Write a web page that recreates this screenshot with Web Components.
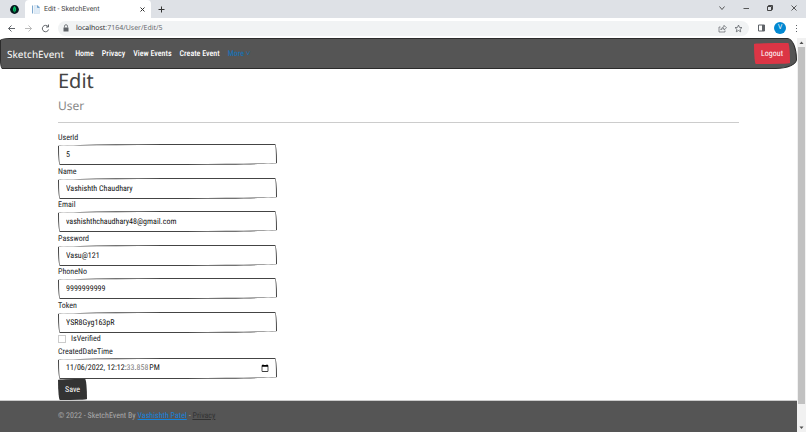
<!DOCTYPE html>
<html lang="en">
<head>
<meta charset="utf-8">
<title>Edit - SketchEvent</title>
<style>
html,body{margin:0}
body{font:8px/12px "Roboto Condensed","Roboto",sans-serif;color:#212529;background:#fff;text-rendering:geometricPrecision}
</style>
</head>
<body>
<browser-window>
  <tab-strip slot="tabs">Edit - SketchEvent</tab-strip>
  <address-bar slot="address" host="localhost" path=":7164/User/Edit/5"></address-bar>
  <site-nav></site-nav>
  <edit-form>
    <text-field label="UserId" value="5"></text-field>
    <text-field label="Name" value="Vashishth Chaudhary"></text-field>
    <text-field label="Email" value="vashishthchaudhary48@gmail.com"></text-field>
    <text-field label="Password" value="Vasu@121"></text-field>
    <text-field label="PhoneNo" value="9999999999"></text-field>
    <text-field label="Token" value="YSR8Gyg163pR"></text-field>
    <check-field>IsVerified</check-field>
    <text-field label="CreatedDateTime" type="datetime-local" value="2022-11-06T12:12:33.858"></text-field>
    <save-button>Save</save-button>
  </edit-form>
  <site-footer></site-footer>
</browser-window>
<script>
const define = (name, markup) => customElements.define(name, class extends HTMLElement {
  constructor() {
    super();
    this.attachShadow({ mode: 'open' }).innerHTML =
      '<style>:host,*{box-sizing:border-box}button,input{text-rendering:inherit}button{font:inherit;cursor:pointer}svg{display:block;fill:none;stroke:currentColor}</style>' +
      (typeof markup === 'function' ? markup(this) : markup);
  }
});

define('browser-window', `
<style>
:host{display:flex;flex-direction:column;min-height:100vh}
.view{flex:1;display:flex}
.page{flex:1;min-width:0;display:flex;flex-direction:column}
.bar{width:9px;background:#f1f1f1;display:flex;flex-direction:column;align-items:center;color:#505050}
.bar svg{fill:currentColor;stroke:none}
.thumb{flex:1;width:7px;margin-bottom:19px;background:#c1c1c1}
</style>
<slot name="tabs"></slot><slot name="address"></slot>
<div class="view">
  <div class="page"><slot></slot></div>
  <div class="bar"><svg width="9" height="9"><path d="M2.5 6 4.5 3.5 6.5 6z"/></svg><div class="thumb"></div><svg width="9" height="9"><path d="M2.5 3.5 4.5 6 6.5 3.5z"/></svg></div>
</div>`);

define('tab-strip', `
<style>
:host{display:flex;align-items:stretch;height:18px;background:#dee1e6;color:#444;font:7px/18px "Roboto",sans-serif}
.pin{width:25px;display:flex;align-items:center;justify-content:center;padding-left:4px}
.tab{width:126px;background:#fff;border-radius:4px 4px 0 0;display:flex;align-items:center;gap:4px;padding:0 6px 0 7px}
.title{flex:1;white-space:nowrap}
button{border:0;background:none;padding:0;color:#333;display:flex;align-items:center}
.new{margin-left:7px}
.win{margin-left:auto;display:flex;gap:16px;padding:0 8px 3px 0}
</style>
<div class="pin"><svg width="9" height="9"><circle cx="4.5" cy="4.5" r="4.4" fill="#07161d" stroke="none"/><path d="M4.5 1C6.800 3.200 6.500 6 4.500 7.200 2.500 6 2.300 3.200 4.500 1z" fill="#00c766" stroke="none"/><path d="M4.500 3.500V8.200" stroke="#09643e" stroke-width=".6"/></svg></div>
<div class="tab">
  <svg width="8" height="9"><path d="M.5.500v8" stroke="#7fa9cf"/><path d="M2 .500h4l1.500 1.500v6.500H2z" fill="#e0ecf7" stroke="#c7d8e8" stroke-width=".5"/><path d="M5.500.500v2h2" fill="#5791c3" stroke="#5791c3" stroke-width=".6"/></svg>
  <span class="title"><slot></slot></span>
  <button aria-label="Close tab"><svg width="5" height="5"><path d="M.5.500l4 4M4.500.500l-4 4"/></svg></button>
</div>
<button class="new" aria-label="New tab"><svg width="7" height="7"><path d="M3.500.500v6M.5 3.500h6"/></svg></button>
<div class="win">
  <button aria-label="Search tabs"><svg width="8" height="8"><path d="M1.500 2.500 4 5.500 6.500 2.500" stroke-width=".8"/></svg></button>
  <button aria-label="Minimize"><svg width="8" height="8"><path d="M1.500 4.500h5.500" stroke-width=".8"/></svg></button>
  <button aria-label="Restore"><svg width="8" height="8"><path d="M1.500 2.500h4v4h-4zM2.500 2.500v-1h4v4h-1" stroke-width=".9"/></svg></button>
  <button aria-label="Close"><svg width="8" height="8"><path d="M1.500 1.500l5 5M6.500 1.500l-5 5" stroke-width=".8"/></svg></button>
</div>`);

define('address-bar', el => `
<style>
:host{display:flex;align-items:center;height:20px;background:#fff;color:#5f6368;font:7px/15px "Open Sans",sans-serif;padding:0 7px;gap:8px}
button{border:0;background:none;padding:0;color:inherit;display:block}
.omni{flex:1;height:15px;border-radius:8px;background:#f1f3f4;display:flex;align-items:center;gap:7px;padding:0 6px 0 5px}
.url{flex:1;white-space:nowrap}
b{font-weight:400;color:#202124}
.v{width:12px;height:12px;line-height:12px;border-radius:50%;background:#0288d1;color:#fff;text-align:center}
</style>
<button aria-label="Back"><svg width="9" height="9"><path d="M8 4.500H1.500M4.500 1.500l-3 3 3 3"/></svg></button>
<button aria-label="Forward" style="color:#aaa"><svg width="9" height="9"><path d="M1 4.500h6.500M4.500 1.500l3 3-3 3" stroke-width=".8"/></svg></button>
<button aria-label="Reload"><svg width="9" height="9"><path d="M7 2.500A3.200 3.200 0 1 0 7.600 5.500M7.500.500v2.500H5"/></svg></button>
<div class="omni">
  <svg width="6" height="8"><path d="M.5 3.500h5v4h-5z" fill="currentColor" stroke="none"/><path d="M1.500 3.500V2.200a1.500 1.500 0 0 1 3 0v1.300" stroke-width=".8"/></svg>
  <span class="url"><b>${el.getAttribute('host')}</b>${el.getAttribute('path')}</span>
  <button aria-label="Share"><svg width="9" height="9"><path d="M2.500 3H1v5h6V6.500M2.800 6C3 4 4.500 3 6 3V1.300L8.500 3.800 6 6V4.500C4.500 4.500 3.500 5 2.800 6z" stroke-width=".7"/></svg></button>
  <button aria-label="Bookmark"><svg width="9" height="9"><path d="M4.500 1l1 2.400 2.500.2-1.900 1.700.6 2.500-2.200-1.300-2.200 1.300.6-2.500L1 3.600l2.500-.2z" stroke-width=".8"/></svg></button>
</div>
<button aria-label="Side panel"><svg width="9" height="8"><path d="M1.500 1h6v6h-6z"/><path d="M5 1h3v6H5z" fill="currentColor" stroke="none"/></svg></button>
<button class="v" aria-label="Profile">V</button>
<button aria-label="Menu"><svg width="5" height="9"><path d="M2 1h1v1H2zM2 4h1v1H2zM2 7h1v1H2z" fill="currentColor" stroke="none"/></svg></button>`);

define('site-nav', `
<style>
:host{display:flex;align-items:center;height:31px;background:#555;border:1px solid #2b2b2b;border-radius:13px 13px 29px 3px / 3px 29px 13px 13px;padding:0 6px;color:#fff}
.brand{font:10px/16px "Noto Sans",sans-serif;margin-right:11px}
nav{display:flex;gap:8px;font-weight:500}
a{color:#fff;text-decoration:none;white-space:nowrap}
.more{color:#1b6fae}
button{margin-left:auto;height:21px;padding:0 7px;border:0;background:#dc3545;color:#fff;border-radius:36px 2px 36px 2px / 1px 20px 1px 20px}
</style>
<a class="brand" href="#">SketchEvent</a>
<nav><a href="#">Home</a><a href="#">Privacy</a><a href="#">View Events</a><a href="#">Create Event</a><a class="more" href="#">More ˅</a></nav>
<button>Logout</button>`);

define('edit-form', `
<style>
:host{flex:1;display:flex;flex-direction:column;margin:0 58px}
h1{font:400 20px/24px "Noto Sans",sans-serif;margin:0;color:#444}
h4{font:400 12px/16px "Noto Sans",sans-serif;margin:5px 0 8px;color:#888}
hr{width:100%;border:0;border-top:1px solid #ccc;margin:0 0 9px}
form{flex:1;width:219px;display:flex;flex-direction:column;justify-content:space-between}
</style>
<h1>Edit</h1><h4>User</h4><hr><form><slot></slot></form>`);

define('text-field', el => `
<style>
:host{display:block}
label{display:block;height:12px}
input{display:block;width:100%;height:21px;font:400 8px/12px "Roboto Condensed","Roboto",sans-serif;color:#111;background:#fff;border:1px solid #444;padding:0 7px;border-radius:130px 2px 113px 2px / 2px 18px 2px 18px}
input::-webkit-calendar-picker-indicator{width:8px;height:8px;padding:0}
input::-webkit-datetime-edit,
input::-webkit-datetime-edit-month-field,
input::-webkit-datetime-edit-day-field,
input::-webkit-datetime-edit-year-field,
input::-webkit-datetime-edit-hour-field,
input::-webkit-datetime-edit-minute-field,
input::-webkit-datetime-edit-second-field,
input::-webkit-datetime-edit-millisecond-field,
input::-webkit-datetime-edit-ampm-field{padding:0}
</style>
<label for="f">${el.getAttribute('label')}</label>
<input id="f" type="${el.getAttribute('type') || 'text'}" value="${el.getAttribute('value')}">`);

define('check-field', `
<style>
:host{display:block}
label{display:flex;align-items:center;gap:5px;height:12px}
input{appearance:none;width:8px;height:8px;margin:0;border:1px solid #ccc;background:#fff}
</style>
<label><input type="checkbox"><slot></slot></label>`);

define('save-button', `
<style>
:host{display:block}
button{display:block;height:21px;padding:0 7px;border:0;background:#333;color:#fff;border-radius:27px 2px 27px 2px / 1px 20px 1px 20px}
</style>
<button type="submit"><slot></slot></button>`);

define('site-footer', `
<style>
:host{display:block;height:32px;background:#555;border-top:1px solid #ccc;padding:9px 58px;color:#aaa;line-height:12px}
a{color:#1583dc}
a.p{color:#333}
</style>
© 2022 - SketchEvent By <a href="#">Vashishth Patel</a> - <a class="p" href="#">Privacy</a>`);
</script>
</body>
</html>
